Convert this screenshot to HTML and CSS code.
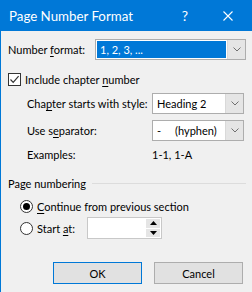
FILE: index.html
```html
<!DOCTYPE html>
<html lang="en">
<head>
  <meta charset="UTF-8">
  <title>Page Number Format</title>
  <link rel="stylesheet" href="styles.css">
</head>
<body>

<div class="dialog">
  <div class="titlebar">
    <span class="title">Page Number Format</span>
    <span class="help">?</span>
    <span class="close">
      <svg width="10" height="10" viewBox="0 0 10 10"><path d="M0.5 0.5 L9.5 9.5 M9.5 0.5 L0.5 9.5" stroke="#fff" stroke-width="1.1" fill="none"/></svg>
    </span>
  </div>

  <div class="content">
    <div class="row row-format">
      <span class="label-format">Number <u>f</u>ormat:</span>
      <div class="combo combo-wide">
        <div class="combo-value"><span class="selected">1, 2, 3, ...</span></div>
        <div class="combo-arrow">
          <svg width="8" height="5" viewBox="0 0 8 5"><path d="M0.5 0.5 L4 4 L7.5 0.5" stroke="#707070" fill="none"/></svg>
        </div>
      </div>
    </div>

    <div class="row row-check">
      <span class="checkbox">
        <svg width="11" height="11" viewBox="0 0 11 11"><path d="M1.5 5.5 L4.2 8.3 L9.6 2.2" stroke="#333" stroke-width="1.2" fill="none"/></svg>
      </span>
      <span>Include chapter <u>n</u>umber</span>
    </div>

    <div class="indent">
      <div class="row row-style">
        <span class="label-indent">Cha<u>p</u>ter starts with style:</span>
        <div class="combo combo-small">
          <div class="combo-value">Heading 2</div>
          <div class="combo-arrow">
            <svg width="8" height="5" viewBox="0 0 8 5"><path d="M0.5 0.5 L4 4 L7.5 0.5" stroke="#707070" fill="none"/></svg>
          </div>
        </div>
      </div>
      <div class="row row-sep">
        <span class="label-indent">Use s<u>e</u>parator:</span>
        <div class="combo combo-small">
          <div class="combo-value"><span class="dash">-</span>(hyphen)</div>
          <div class="combo-arrow">
            <svg width="8" height="5" viewBox="0 0 8 5"><path d="M0.5 0.5 L4 4 L7.5 0.5" stroke="#707070" fill="none"/></svg>
          </div>
        </div>
      </div>
      <div class="row row-examples">
        <span class="label-indent">Examples:</span>
        <span class="examples">1-1, 1-A</span>
      </div>
    </div>

    <div class="group-head">
      <span>Page numbering</span>
      <span class="group-line"></span>
    </div>

    <div class="row row-radio1">
      <span class="radio checked"><span class="dot"></span></span>
      <span><u>C</u>ontinue from previous section</span>
    </div>
    <div class="row row-radio2">
      <span class="radio"></span>
      <span class="label-start">Start <u>a</u>t:</span>
      <div class="spin">
        <div class="spin-value"></div>
        <div class="spin-buttons">
          <div class="spin-btn"><svg width="7" height="4" viewBox="0 0 7 4"><path d="M0 4 L3.5 0 L7 4 Z" fill="#000"/></svg></div>
          <div class="spin-btn"><svg width="7" height="4" viewBox="0 0 7 4"><path d="M0 0 L3.5 4 L7 0 Z" fill="#000"/></svg></div>
        </div>
      </div>
    </div>

    <div class="buttons">
      <button class="btn btn-default">OK</button>
      <button class="btn">Cancel</button>
    </div>
  </div>
</div>

</body>
</html>
```

FILE: styles.css
```css
html, body {
  margin: 0;
  padding: 0;
}
body {
  width: 252px;
  height: 292px;
  overflow: hidden;
  font-family: 'Lato', 'Noto Sans', sans-serif;
  font-size: 11px;
  color: #000;
  background: #f0f0f0;
  white-space: nowrap;
}
u {
  text-decoration-thickness: 1px;
  text-underline-offset: 2px;
}
.dialog {
  height: 292px;
  border-left: 1px solid #0078d7;
  background: #f0f0f0;
}
.titlebar {
  height: 31px;
  background: #0078d7;
  color: #fff;
  display: flex;
  align-items: center;
  font-size: 13.3px;
}
.title {
  padding-left: 8px;
  flex: 1;
}
.help {
  width: 14px;
  text-align: center;
  font-size: 14px;
  margin-right: 31px;
}
.close {
  display: flex;
  width: 10px;
  margin-right: 19px;
}
.content {
  padding-left: 7px;
}
.row {
  display: flex;
  align-items: center;
}
.row-format {
  margin-top: 7px;
  height: 22px;
}
.label-format {
  width: 87px;
}
.combo {
  display: flex;
  height: 21px;
  box-sizing: border-box;
  border: 1px solid #adadad;
  background: #fff;
}
.combo-wide {
  width: 151px;
}
.combo-small {
  width: 92px;
}
.combo-value {
  flex: 1;
  display: flex;
  align-items: center;
  padding-left: 4px;
}
.combo-wide .combo-value {
  padding: 1px;
}
.selected {
  flex: 1;
  align-self: stretch;
  display: flex;
  align-items: center;
  padding-left: 3px;
  background: #0078d7;
  color: #fff;
}
.combo-arrow {
  width: 17px;
  background: #e5e5e5;
  border-left: 1px solid #d9d9d9;
  display: flex;
  align-items: center;
  justify-content: center;
}
.row-check {
  margin-top: 12px;
  height: 14px;
}
.checkbox {
  width: 13px;
  height: 13px;
  box-sizing: border-box;
  border: 1px solid #333;
  background: #fff;
  display: flex;
  align-items: center;
  justify-content: center;
  margin-right: 4px;
}
.indent {
  padding-left: 19px;
}
.row-style {
  margin-top: 7px;
  height: 21px;
}
.row-sep {
  margin-top: 6px;
  height: 21px;
}
.label-indent {
  width: 125px;
}
.dash {
  margin-right: 14px;
}
.row-examples {
  margin-top: 5px;
  height: 17px;
}
.group-head {
  display: flex;
  align-items: center;
  margin-top: 12px;
  height: 16px;
}
.group-line {
  flex: 1;
  height: 1px;
  background: #dcdcdc;
  margin: 0 6px 0 6px;
}
.row-radio1 {
  margin-top: 8px;
  height: 14px;
  padding-left: 12px;
}
.radio {
  width: 13px;
  height: 13px;
  box-sizing: border-box;
  border: 1px solid #333;
  border-radius: 50%;
  background: #fff;
  display: flex;
  align-items: center;
  justify-content: center;
  margin-right: 4px;
}
.dot {
  width: 7px;
  height: 7px;
  border-radius: 50%;
  background: #000;
}
.row-radio2 {
  margin-top: 4px;
  height: 22px;
  padding-left: 12px;
}
.label-start {
  width: 50px;
}
.spin {
  display: flex;
  width: 75px;
  height: 22px;
  box-sizing: border-box;
  border: 1px solid #c8c8c8;
  background: #fff;
}
.spin-value {
  flex: 1;
}
.spin-buttons {
  width: 14px;
  display: flex;
  flex-direction: column;
  gap: 1px;
  padding: 1px;
  background: #fff;
}
.spin-btn {
  flex: 1;
  background: #e5e5e5;
  display: flex;
  align-items: center;
  justify-content: center;
}
.buttons {
  display: flex;
  gap: 12px;
  padding-left: 45px;
  margin-top: 23px;
}
.btn {
  width: 89px;
  height: 22px;
  font-family: inherit;
  font-size: 11px;
  background: #e1e1e1;
  border: 1px solid #adadad;
  padding: 0;
  color: #000;
}
.btn-default {
  border-color: #0078d7;
}
```
